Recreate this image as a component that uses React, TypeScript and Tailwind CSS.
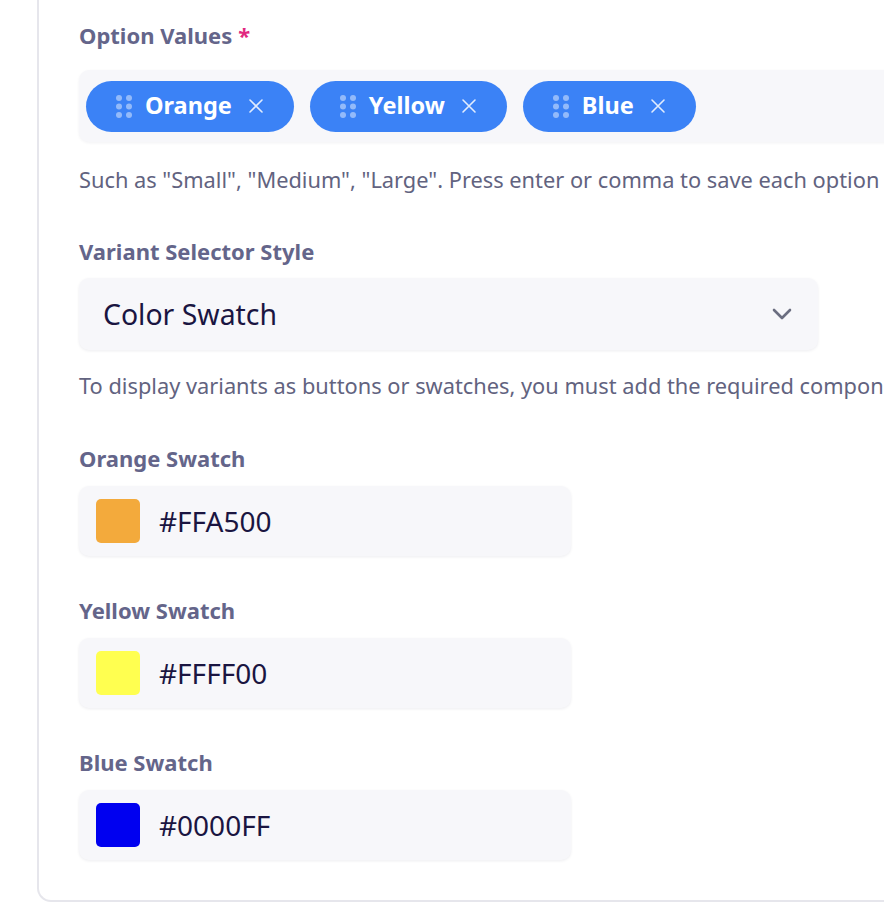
import React from 'react'

const tags = ['Orange', 'Yellow', 'Blue']

const swatches = [
  { name: 'Orange', hex: '#FFA500', color: 'bg-[#f3aa3c]' },
  { name: 'Yellow', hex: '#FFFF00', color: 'bg-[#ffff50]' },
  { name: 'Blue', hex: '#0000FF', color: 'bg-[#0000f0]' },
]

function DragDots() {
  return (
    <svg width="16" height="23" viewBox="0 0 16 23" className="shrink-0">
      {[3, 11.5, 20].map((cy) =>
        [3, 13].map((cx) => (
          <circle key={`${cx}-${cy}`} cx={cx} cy={cy} r="3" fill="rgba(255,255,255,0.45)" />
        ))
      )}
    </svg>
  )
}

function CloseIcon() {
  return (
    <svg width="16" height="16" viewBox="0 0 16 16" className="shrink-0">
      <path d="M2 2 L14 14 M14 2 L2 14" stroke="rgba(255,255,255,0.85)" strokeWidth="1.6" strokeLinecap="round" />
    </svg>
  )
}

function Label({ children, required }: { children: React.ReactNode; required?: boolean }) {
  return (
    <div className="text-[22px] leading-[28px] font-bold text-[#64658a]">
      {children}
      {required && <span className="ml-[6px] text-[#e1287f]">*</span>}
    </div>
  )
}

function Helper({ children }: { children: React.ReactNode }) {
  return <div className="text-[21.8px] leading-[28px] text-[#62637f] whitespace-nowrap">{children}</div>
}

export default function App() {
  return (
    <div className="w-[884px] h-[924px] overflow-hidden bg-white font-['Noto_Sans',sans-serif]">
      <div className="ml-[37px] w-[1000px] border-l-2 border-b-2 border-[#e6e6ec] rounded-bl-[14px] pl-[40px] pt-[21px] pb-[40px]">
        {/* Option values */}
        <Label required>Option Values</Label>
        <div className="mt-[21px] h-[72px] w-[920px] rounded-[10px] bg-[#f7f7fa] shadow-[0_1px_3px_rgba(30,30,60,0.06)] flex items-center gap-4 pl-[7px]">
          {tags.map((tag) => (
            <div
              key={tag}
              className="h-[51px] rounded-full bg-[#3b82f6] pl-[30px] pr-[30px] flex items-center text-white font-bold text-[23.5px]"
            >
              <DragDots />
              <span className="ml-[13px] mr-[16px] leading-none pb-[1px]">{tag}</span>
              <CloseIcon />
            </div>
          ))}
        </div>
        <div className="mt-[24px]">
          <Helper>Such as "Small", "Medium", "Large". Press enter or comma to save each option</Helper>
        </div>

        {/* Selector style */}
        <div className="mt-[43px]">
          <Label>Variant Selector Style</Label>
        </div>
        <div className="mt-[13px] h-[72px] w-[739px] rounded-[10px] bg-[#f7f7fa] shadow-[0_1px_3px_rgba(30,30,60,0.08)] flex items-center justify-between pl-[24px] pr-[26px]">
          <span className="text-[28.4px] text-[#1a1541]">Color Swatch</span>
          <svg width="20" height="12" viewBox="0 0 20 12">
            <path d="M2 2 L10 10 L18 2" fill="none" stroke="#6b6e80" strokeWidth="2.6" strokeLinecap="round" strokeLinejoin="round" />
          </svg>
        </div>
        <div className="mt-[22px]">
          <Helper>To display variants as buttons or swatches, you must add the required components to your theme</Helper>
        </div>

        {/* Swatches */}
        {swatches.map((s, i) => (
          <div key={s.name} className={i === 0 ? 'mt-[44px]' : 'mt-[40px]'}>
            <Label>{s.name} Swatch</Label>
            <div className="mt-[14px] h-[70px] w-[492px] rounded-[10px] bg-[#f7f7fa] shadow-[0_1px_3px_rgba(30,30,60,0.08)] flex items-center pl-[17px]">
              <div className={`w-[44px] h-[44px] rounded-[5px] ${s.color}`} />
              <span className="ml-[19px] text-[28px] text-[#1a1541]">{s.hex}</span>
            </div>
          </div>
        ))}
      </div>
    </div>
  )
}
